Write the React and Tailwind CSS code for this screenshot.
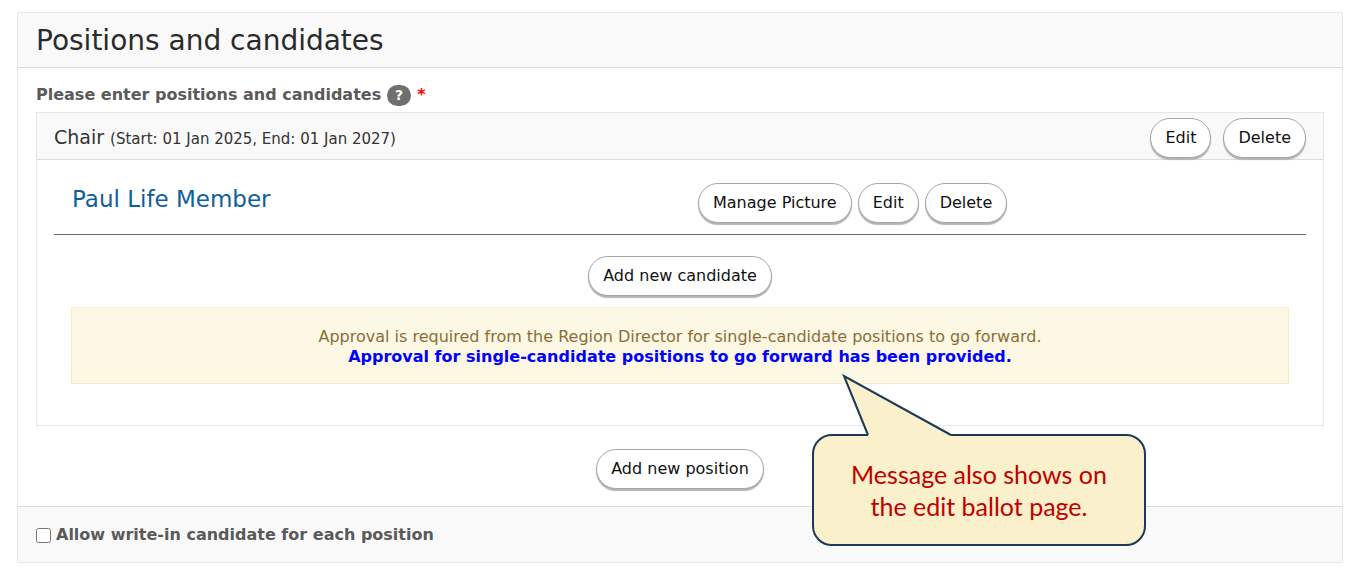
import { useState } from "react";

const position = {
  title: "Chair",
  term: "(Start: 01 Jan 2025, End: 01 Jan 2027)",
  candidates: [{ id: 1, name: "Paul Life Member" }]
};

function PillButton({ children, onClick }) {
  return (
    <button
      type="button"
      onClick={onClick}
      className="h-10 rounded-full border border-[#a6a6a6] bg-white px-[14px] text-base text-[#111] shadow-[0_2px_1px_#b4b4b4]"
    >
      {children}
    </button>
  );
}

function Callout({ children }) {
  return (
    <div className="absolute top-[126px] left-1/2 z-10 ml-[132px] w-[334px] rounded-[20px] border-2 border-[#1b3a57] bg-[#faf0cb] px-6 py-[22px] text-center font-['Lato',sans-serif] text-[25px] leading-8 text-[#c00000]">
      <svg className="absolute -top-[62px] left-6 h-[64px] w-[120px]" viewBox="0 0 120 64" aria-hidden="true">
        <path d="M30 64 L30 61 L6 2 L113 61 L113 64 Z" fill="#faf0cb" />
        <path d="M30 61 L6 2 L113 61" fill="none" stroke="#1b3a57" strokeWidth="2" />
      </svg>
      {children}
    </div>
  );
}

function PositionPanel({ position }) {
  return (
    <div className="border border-[#e6e6ee]">
      <div className="flex h-[47px] items-center justify-between border-b border-[#dcdcdc] bg-[#f9f9f9] px-[17px] pt-[3px]">
        <h3 className="text-[19px] leading-6 text-[#333]">
          {position.title} <small className="text-[15px]">{position.term}</small>
        </h3>
        <div className="flex gap-3">
          <PillButton>Edit</PillButton>
          <PillButton>Delete</PillButton>
        </div>
      </div>

      <div className="px-[17px] pb-[41px]">
        {position.candidates.map((candidate) => (
          <div key={candidate.id} className="grid grid-cols-2 border-b border-[#6b6b6b] pt-[23px] pb-[11px]">
            <h4 className="px-[18px] text-[23px] leading-8 text-[#10609c]">{candidate.name}</h4>
            <div className="flex gap-[6px] px-[18px]">
              <PillButton>Manage Picture</PillButton>
              <PillButton>Edit</PillButton>
              <PillButton>Delete</PillButton>
            </div>
          </div>
        ))}

        <div className="flex justify-center pt-[21px] pb-[11px]">
          <PillButton>Add new candidate</PillButton>
        </div>

        <div className="relative mx-[17px] border border-[#faebcc] bg-[#fcf8e3] pt-[19px] pb-4 text-center text-base leading-5 text-[#8a6d3b]">
          <p>Approval is required from the Region Director for single-candidate positions to go forward.</p>
          <p className="font-bold text-[#0000ff]">Approval for single-candidate positions to go forward has been provided.</p>
          <Callout>
            Message also shows on
            <br />
            the edit ballot page.
          </Callout>
        </div>
      </div>
    </div>
  );
}

export default function App() {
  const [allowWriteIn, setAllowWriteIn] = useState(false);

  return (
    <div className="bg-white pt-3 pr-5 pb-2 pl-[17px] font-['DejaVu_Sans',sans-serif]">
      <section className="rounded-xs border border-[#e4e8ec]">
        <h2 className="border-b border-[#dcdcdc] bg-[#f9f9f9] px-[18px] pt-[10px] pb-2 text-[28px] leading-9 text-[#2b2b2b]">
          Positions and candidates
        </h2>

        <div className="px-[18px] pt-[15px] pb-[17px]">
          <div className="mb-[5px] flex items-center gap-[6px] text-base leading-6 font-bold text-[#5a5a5a]">
            <span>Please enter positions and candidates</span>
            <button type="button" aria-label="Help" className="h-[21px] w-6 rounded-full bg-[#6f6f6f] text-sm leading-5 text-white">
              ?
            </button>
            <span className="text-[#ff0000]">*</span>
          </div>

          <PositionPanel position={position} />

          <div className="flex justify-center pt-[23px]">
            <PillButton>Add new position</PillButton>
          </div>
        </div>

        <div className="border-t border-[#dcdcdc] bg-[#f9f9f9] px-[18px] pt-4 pb-[15px]">
          <label className="flex items-center gap-[5px] text-base leading-6 font-bold text-[#5a5a5a]">
            <input
              type="checkbox"
              className="h-[15px] w-[15px]"
              checked={allowWriteIn}
              onChange={(event) => setAllowWriteIn(event.target.checked)}
            />
            Allow write-in candidate for each position
          </label>
        </div>
      </section>
    </div>
  );
}
